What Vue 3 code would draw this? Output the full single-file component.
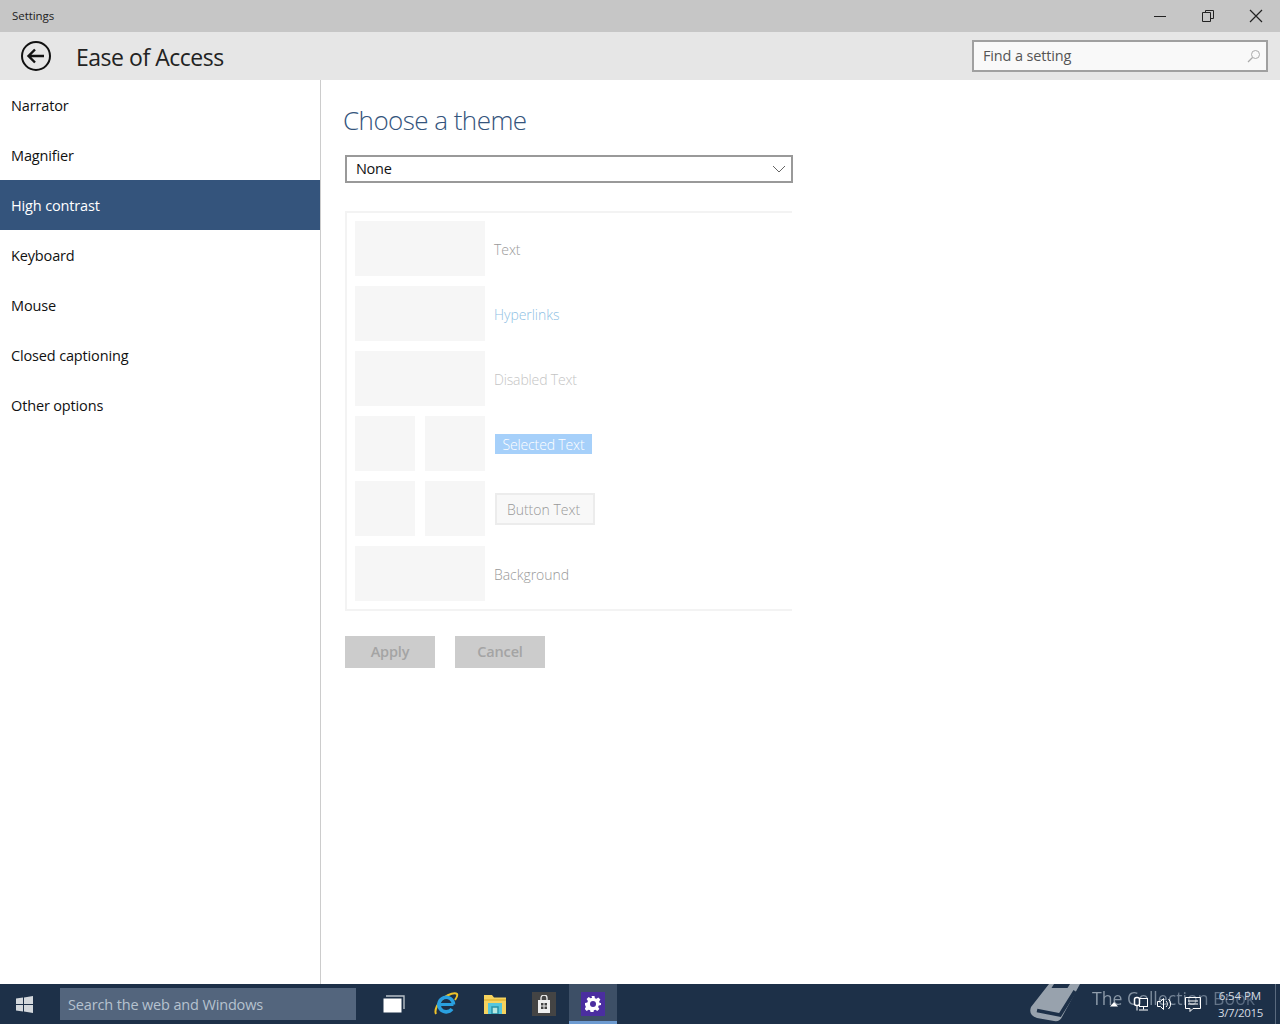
<script setup>
const navItems = [
  { label: 'Narrator' },
  { label: 'Magnifier' },
  { label: 'High contrast', active: true },
  { label: 'Keyboard' },
  { label: 'Mouse' },
  { label: 'Closed captioning' },
  { label: 'Other options' }
]
</script>

<template>
  <div class="screen">
    <div class="titlebar">
      <span class="title">Settings</span>
      <div class="winbtns">
        <span class="winbtn"><svg width="14" height="14" viewBox="0 0 14 14"><path d="M1 7.500h12" stroke="#222" stroke-width="1" fill="none"/></svg></span>
        <span class="winbtn"><svg width="14" height="14" viewBox="0 0 14 14"><path d="M1.500 3.500h8v9h-8zM4.500 3.500v-2h8v8h-3" stroke="#222" stroke-width="1" fill="none"/></svg></span>
        <span class="winbtn"><svg width="14" height="14" viewBox="0 0 14 14"><path d="M1 1l12 12M13 1L1 13" stroke="#222" stroke-width="1.2" fill="none"/></svg></span>
      </div>
    </div>
    <header class="header">
      <svg class="back" width="32" height="32" viewBox="0 0 32 32"><circle cx="16" cy="16" r="14" fill="none" stroke="#111" stroke-width="2"/><path d="M24 16H9M15 9.500L8.500 16l6.500 6.500" fill="none" stroke="#111" stroke-width="2.4"/></svg>
      <h1 class="pagetitle">Ease of Access</h1>
      <div class="search">
        <span>Find a setting</span>
        <svg width="14" height="14" viewBox="0 0 14 14"><circle cx="8.500" cy="5.500" r="4" fill="none" stroke="#aaa"/><path d="M5.500 8.500L1 13" stroke="#aaa" stroke-width="1.2"/></svg>
      </div>
    </header>
    <div class="body">
      <nav class="nav">
        <div v-for="item in navItems" :key="item.label" class="navitem" :class="{ active: item.active }">{{ item.label }}</div>
      </nav>
      <main class="main">
        <h2 class="heading">Choose a theme</h2>
        <div class="select">
          <span>None</span>
          <svg width="14" height="8" viewBox="0 0 14 8"><path d="M1 1l6 6 6-6" fill="none" stroke="#666"/></svg>
        </div>
        <div class="panel">
          <div class="row"><div class="swatch wide"></div><span class="lbl">Text</span></div>
          <div class="row"><div class="swatch wide"></div><span class="lbl link">Hyperlinks</span></div>
          <div class="row"><div class="swatch wide"></div><span class="lbl disabled">Disabled Text</span></div>
          <div class="row"><div class="swatch half"></div><div class="swatch half"></div><span class="selected">Selected Text</span></div>
          <div class="row"><div class="swatch half"></div><div class="swatch half"></div><span class="btntext">Button Text</span></div>
          <div class="row"><div class="swatch wide"></div><span class="lbl">Background</span></div>
        </div>
        <div class="actions">
          <span class="action">Apply</span>
          <span class="action">Cancel</span>
        </div>
      </main>
    </div>
    <footer class="taskbar">
      <div class="start"><svg width="17" height="17" viewBox="0 0 17 17"><path d="M0 2.600L7 1.600V8H0zM8 1.400L17 0v8H8zM0 9h7v6.400L0 14.400zM8 9h9v8L8 15.600z" fill="#d3d8dd"/></svg></div>
      <div class="tsearch">Search the web and Windows</div>
      <div class="tbicon first">
        <svg width="24" height="20" viewBox="0 0 24 20"><path d="M4 2h18v13" fill="none" stroke="#b8c0c8" stroke-width="1.4"/><rect x="1.500" y="4.500" width="18" height="14" fill="#fff"/></svg>
      </div>
      <div class="tbicon ie">
        <svg width="26" height="26" viewBox="0 0 26 26">
          <path d="M3 23C1 19 5 11 11 6.500 16 3 22 1 24 3c1 2-.5 4-2 6" fill="none" stroke="#efc32a" stroke-width="2"/>
          <path d="M7 13.500h13.500" stroke="#2aa0e0" stroke-width="3" fill="none"/>
          <path d="M20.500 13.500A7.300 7.300 0 1 0 19 18" fill="none" stroke="#2aa0e0" stroke-width="3.600"/>
        </svg>
      </div>
      <div class="tbicon">
        <svg width="22" height="20" viewBox="0 0 22 20"><path d="M0 1h8l2 2.500h12V20H0z" fill="#f6d35e"/><path d="M0 5h22v2H0z" fill="#e8bd3c"/><rect x="4" y="9" width="14" height="11" fill="#55c6dc"/><rect x="8" y="13" width="6" height="7" fill="#b8e8e0" stroke="#2a94a8" stroke-width="1.500"/></svg>
      </div>
      <div class="tbicon">
        <span class="tile store"><svg width="14" height="18" viewBox="0 0 14 18"><path d="M4 5V3a3 3 0 0 1 6 0v2" fill="none" stroke="#eee" stroke-width="1.300"/><path d="M1 5h12v13H1z" fill="#eee"/><path d="M4 8h2.500v2.500H4zM7.500 8H10v2.500H7.500zM4 11.500h2.500V14H4zM7.500 11.500H10V14H7.500z" fill="#444"/></svg></span>
      </div>
      <div class="tbicon activeapp">
        <span class="tile gear"><svg width="16" height="16" viewBox="0 0 16 16"><path d="M6.500 0h3l.4 2.200 1.500.6L13.300 1.500l2.100 2.100-1.300 1.900.6 1.500L16 6.900v2.200l-2.300.4-.6 1.500 1.300 1.900-2.100 2.100-1.900-1.300-1.500.6-.4 1.700h-3l-.4-1.700-1.500-.6-1.900 1.300-2.100-2.100 1.300-1.900-.6-1.500L0 9.100V6.900l2.300-.4.6-1.500L1.600 3.100 3.700 1l1.900 1.300 1.500-.6z" fill="#fff"/><circle cx="8" cy="8" r="3" fill="#4b2ea0"/></svg></span>
      </div>
      <div class="watermark">
        <svg width="52" height="38" viewBox="0 0 52 38"><path d="M20 0H51L33 33Q31 38 25 37L8 34Q-1 31 2 23Z" fill="#98a2ad"/><path d="M8 26.500L31 31 46 7" fill="none" stroke="#1d3048" stroke-width="3.500"/><path d="M25 0h16l-2.500 4H22.500z" fill="#1d3048"/></svg>
        <span>The Collection Book</span>
      </div>
      <div class="tray">
        <svg width="10" height="6" viewBox="0 0 10 6"><path d="M5 1l4 4.500H1z" fill="#fff"/></svg>
        <svg class="net" width="18" height="18" viewBox="0 0 18 18"><rect x="7.500" y="3.500" width="8" height="8" fill="#1d3048" stroke="#fff"/><rect x="2.500" y="2.500" width="5" height="8" rx="2" fill="#1d3048" stroke="#fff" stroke-width="1.500"/><path d="M11.500 12v2.500M7 15h9M5 10.500v5" stroke="#fff"/></svg>
        <svg class="vol" width="18" height="16" viewBox="0 0 18 16"><path d="M1.500 5.500h3l3-3v11l-3-3h-3z" fill="none" stroke="#fff"/><path d="M10 5a4 4 0 0 1 0 6M12.500 3a7 7 0 0 1 0 10" fill="none" stroke="#fff"/></svg>
        <svg class="msg" width="18" height="17" viewBox="0 0 18 17"><path d="M1.500 1.500h15v11H9l-3 3v-3H1.500z" fill="none" stroke="#fff"/><path d="M4 5h10M4 8h10" stroke="#fff"/></svg>
        <div class="clock"><span class="time">6:54 PM</span><span class="date">3/7/2015</span></div>
      </div>
      <div class="showdesk"></div>
    </footer>
  </div>
</template>

<style>
html, body { margin: 0; padding: 0; }
</style>

<style scoped>
.screen {
  width: 1280px; height: 1024px; display: flex; flex-direction: column; overflow: hidden;
  background: #fff; font-family: "Open Sans", "Liberation Sans", sans-serif; color: #111; position: relative;
}
.titlebar { height: 32px; flex: none; background: #c6c6c6; display: flex; align-items: center; justify-content: space-between; }
.title { margin-left: 12px; font-size: 11.500px; color: #222; padding-bottom: 2px; letter-spacing: -0.05px; }
.winbtns { display: flex; }
.winbtn { width: 48px; height: 32px; display: flex; align-items: center; justify-content: center; }
.header { height: 48px; flex: none; background: #e6e6e6; display: flex; align-items: center; }
.back { margin-left: 20px; }
.pagetitle { margin: 0 0 0 24px; padding-top: 2px; font-size: 23px; font-weight: 400; color: #222; flex: 1; letter-spacing: -0.47px; }
.search {
  width: 296px; height: 32px; box-sizing: border-box; margin-right: 12px; border: 2px solid #a0a0a0; background: #f9f9f9;
  display: flex; align-items: center; justify-content: space-between; padding: 0 5px 0 9px; font-size: 14.500px; color: #555; letter-spacing: -0.15px;
}
.search span { margin-bottom: 2px; }
.body { flex: 1; display: flex; min-height: 0; }
.nav { width: 320px; flex: none; border-right: 1px solid #ccc; }
.navitem { height: 50px; display: flex; align-items: center; padding: 1px 0 0 11px; font-size: 14.500px; box-sizing: border-box; color: #111; letter-spacing: -0.15px; }
.navitem.active { background: #34547c; color: #fff; }
.main { flex: 1; padding-left: 24px; }
.heading { margin: 20px 0 0 -2px; font-size: 26px; line-height: 40px; font-weight: 300; color: #34547c; letter-spacing: -0.55px; }
.select {
  width: 448px; height: 28px; box-sizing: border-box; margin-top: 15px; border: 2px solid #999; display: flex; align-items: center;
  justify-content: space-between; padding: 0 5px 0 9px; font-size: 14.500px; color: #111; letter-spacing: -0.3px;
}
.select span { margin-bottom: 1px; }
.panel {
  width: 447px; box-sizing: border-box; margin-top: 28px; padding: 8px 0 8px 8px; border: 2px solid #f3f3f3; border-right: none;
  display: flex; flex-direction: column; gap: 10px;
}
.row { height: 55px; display: flex; align-items: center; }
.swatch { height: 55px; background: #f6f6f6; }
.swatch.wide { width: 130px; }
.swatch.half { width: 60px; }
.swatch.half + .swatch.half { margin-left: 10px; }
.lbl { margin-left: 9px; font-size: 14px; color: #999; font-weight: 300; padding-top: 2px; letter-spacing: -0.05px; }
.lbl.link { color: #8fbfe4; }
.lbl.disabled { color: #c4c4c4; letter-spacing: -0.15px; }
.selected { margin-left: 10px; width: 97px; height: 20px; background: #a6d0fa; color: #fff; font-size: 14px; font-weight: 300; letter-spacing: -0.15px; display: flex; align-items: center; justify-content: center; padding-top: 1px; box-sizing: border-box; }
.btntext { margin-left: 10px; width: 100px; height: 32px; box-sizing: border-box; border: 2px solid #ececec; background: #f8f8f8; color: #999; font-size: 14px; font-weight: 300; display: flex; align-items: center; justify-content: center; padding: 2px 3px 0 0; }
.actions { margin-top: 25px; display: flex; gap: 20px; }
.action { width: 90px; height: 32px; background: #ccc; color: #a4a4a4; font-size: 14.500px; font-weight: 600; letter-spacing: -0.15px; display: flex; align-items: center; justify-content: center; padding-bottom: 1px; box-sizing: border-box; }
.taskbar { height: 40px; flex: none; background: #1d3048; display: flex; align-items: center; position: relative; }
.start { width: 48px; height: 40px; flex: none; display: flex; align-items: center; justify-content: center; }
.tsearch { margin-left: 12px; width: 296px; height: 32px; box-sizing: border-box; background: #53657d; color: #b6c2cf; font-size: 14.500px; letter-spacing: -0.15px; padding-left: 8px; display: flex; align-items: center; flex: none; }
.tbicon { width: 48px; height: 40px; flex: none; margin-left: 1px; display: flex; align-items: center; justify-content: center; box-sizing: border-box; }
.tbicon.first { margin-left: 14px; }
.tbicon.ie { margin-left: 4px; }
.tbicon.activeapp { background: #3d4f66; border-bottom: 3px solid #6d9bd1; padding-top: 3px; }
.tile { width: 24px; height: 24px; display: flex; align-items: center; justify-content: center; }
.store { background: #444; }
.gear { background: #4b2ea0; }
.tray { position: absolute; right: 17px; top: 0; height: 40px; display: flex; align-items: center; color: #fff; z-index: 2; }
.net { margin-left: 13px; }
.vol { margin-left: 6px; }
.msg { margin-left: 10px; }
.clock { margin-left: 15px; width: 46px; display: flex; flex-direction: column; align-items: flex-end; font-size: 11.500px; line-height: 17px; color: #d5dbe2; white-space: nowrap; }
.time { margin-right: 2px; letter-spacing: -0.1px; }
.date { letter-spacing: -0.35px; }
.showdesk { position: absolute; right: 4px; top: 0; width: 1px; height: 40px; background: #5a6a7e; }
.watermark { position: absolute; left: 1029px; top: 0; height: 38px; display: flex; align-items: flex-start; font-size: 17.700px; }
.watermark span { margin-left: 11px; line-height: 28px; background: linear-gradient(90deg, #93a0ae, #55677d); -webkit-background-clip: text; background-clip: text; color: transparent; white-space: nowrap; }
</style>
